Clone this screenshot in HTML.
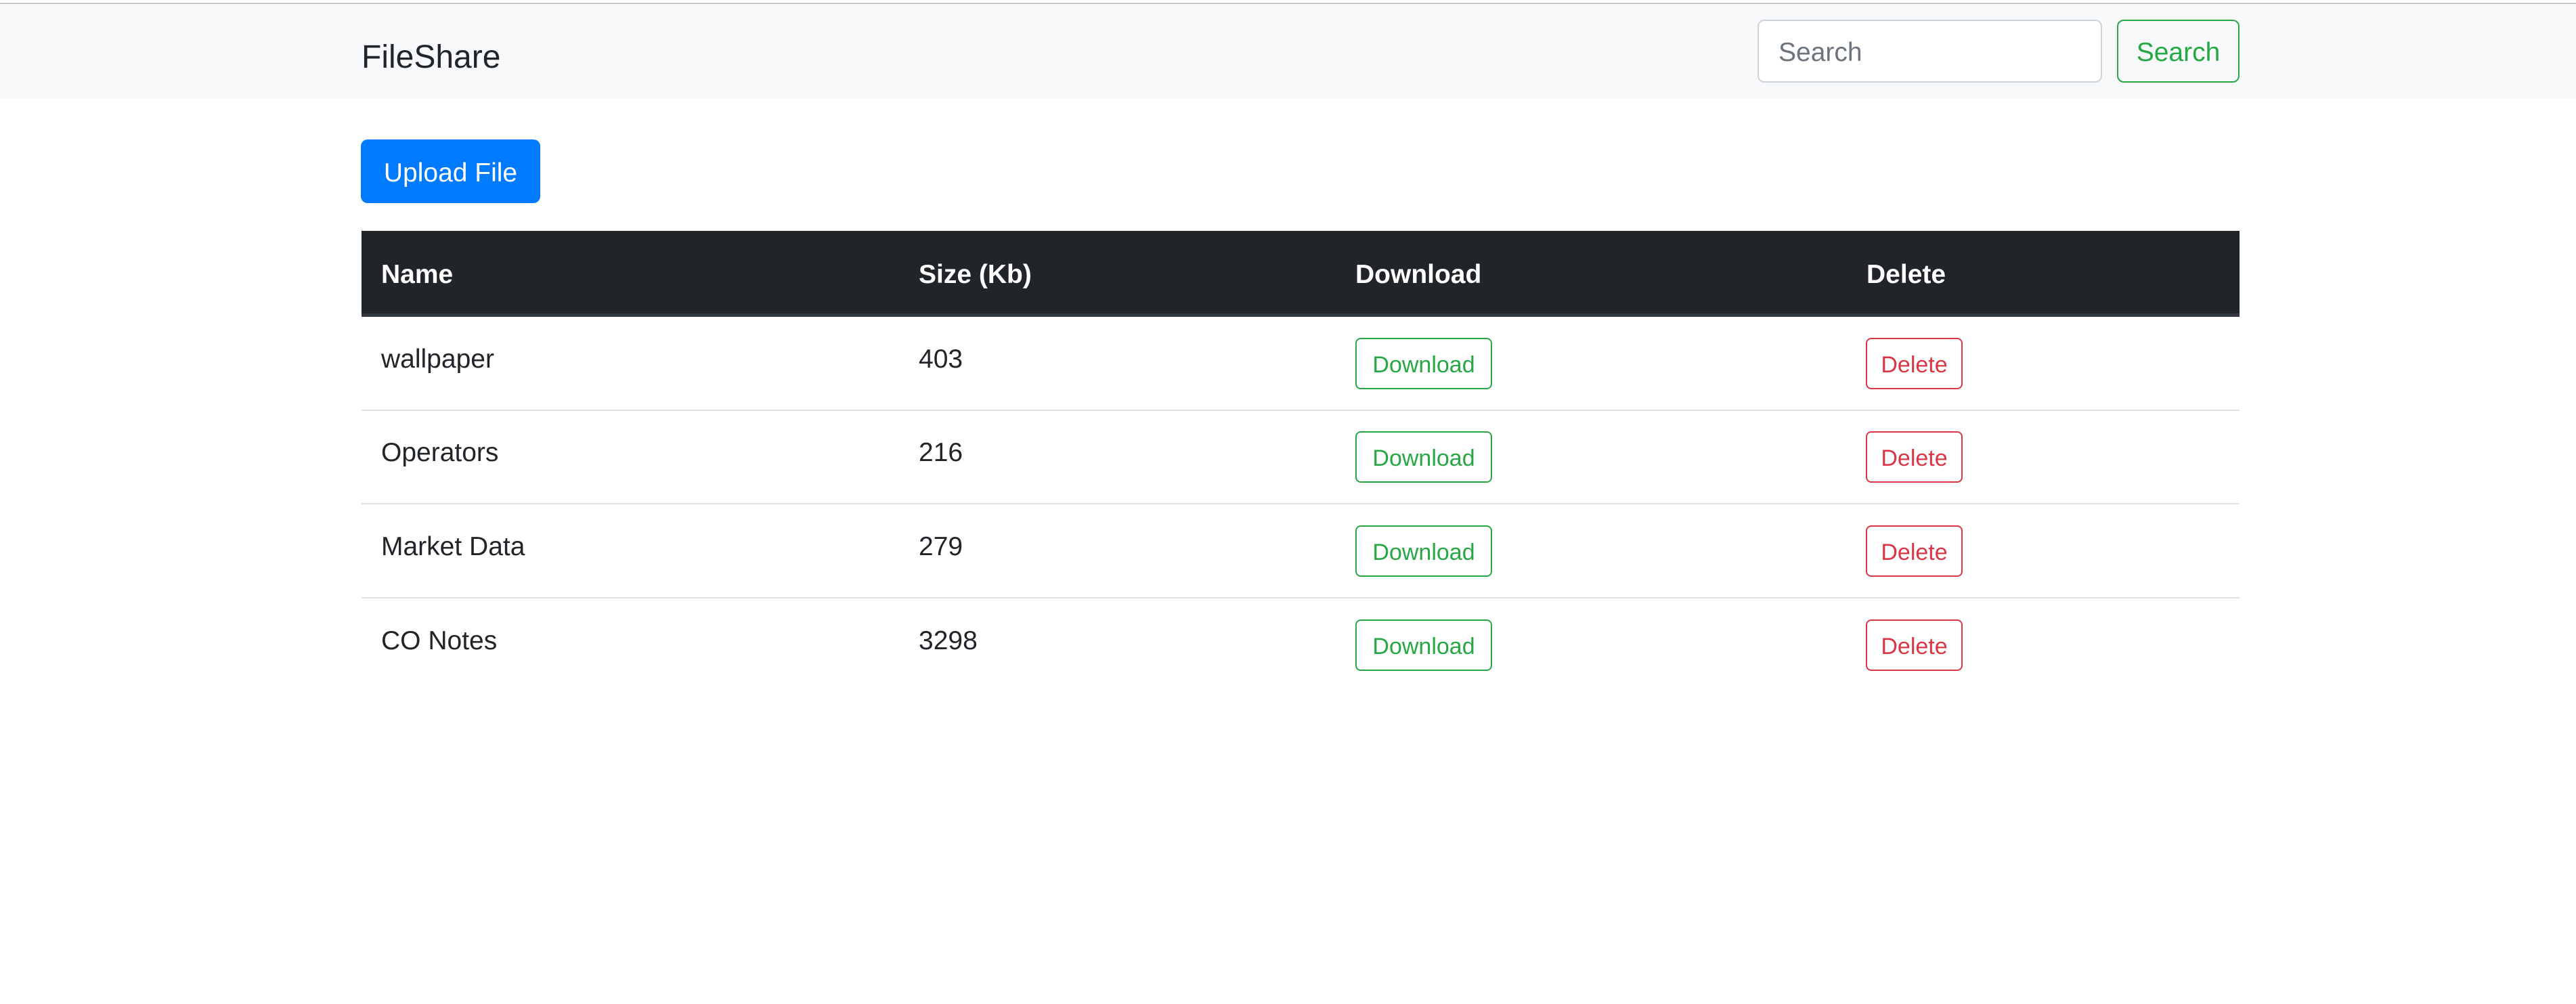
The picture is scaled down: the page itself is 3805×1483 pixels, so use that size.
<!DOCTYPE html>
<html><head><meta charset="utf-8"><style>
*{box-sizing:border-box;margin:0;padding:0}
html,body{width:3805px;height:1483px;background:#fff;overflow:hidden;font-family:"Liberation Sans",sans-serif;color:#212529}
.topline{position:absolute;left:0;top:4px;width:3805px;height:2px;background:#c8c8c8}
.nav{position:absolute;left:0;top:6px;width:3805px;height:140px;background:#f8f9fa}
.brand{position:absolute;left:534px;top:50px;font-size:48px;line-height:58px;color:#212529}
.inp{position:absolute;left:2596px;top:29px;width:509px;height:93px;border:2.5px solid #ced4da;border-radius:10px;background:#fff;font-size:39px;color:#6c757d;padding-left:29px;line-height:94px}
.sbtn{position:absolute;left:3127px;top:29px;width:181px;height:93px;border:2.5px solid #28a745;border-radius:10px;font-size:39px;color:#28a745;text-align:center;line-height:94px}
.up{position:absolute;left:533px;top:206px;width:265px;height:94px;background:#007bff;border-radius:10px;color:#fff;font-size:39px;text-align:center;line-height:100px}
.th{position:absolute;left:534px;top:341px;width:2774px;height:127px;background:#212529;border-bottom:5px solid #32383e}
.th div{position:absolute;top:4px;line-height:122px;color:#fff;font-weight:bold;font-size:39px}
.row{position:absolute;left:534px;width:2774px;height:139px;border-bottom:2.5px solid #dee2e6}
.row .t{position:absolute;top:34px;font-size:39px;line-height:58px}
.b{position:absolute;top:31px;height:76px;border:2.5px solid;border-radius:8px;font-size:34px;line-height:77px;text-align:center}
.dl{left:1468px;width:202px;color:#28a745;border-color:#28a745}
.de{left:2222px;width:143px;color:#dc3545;border-color:#dc3545}
</style></head><body>
<div class="topline"></div>
<div class="nav">
<div class="brand">FileShare</div>
</div>
<div class="inp">Search</div>
<div class="sbtn">Search</div>
<div class="up">Upload File</div>
<div class="th">
<div style="left:29px">Name</div>
<div style="left:823px">Size (Kb)</div>
<div style="left:1468px">Download</div>
<div style="left:2223px">Delete</div>
</div>
<div class="row" style="top:468px"><div class="t" style="left:29px">wallpaper</div><div class="t" style="left:823px">403</div><div class="b dl">Download</div><div class="b de">Delete</div></div>
<div class="row" style="top:606px"><div class="t" style="left:29px">Operators</div><div class="t" style="left:823px">216</div><div class="b dl">Download</div><div class="b de">Delete</div></div>
<div class="row" style="top:745px"><div class="t" style="left:29px">Market Data</div><div class="t" style="left:823px">279</div><div class="b dl">Download</div><div class="b de">Delete</div></div>
<div class="row" style="top:884px;border-bottom:none"><div class="t" style="left:29px">CO Notes</div><div class="t" style="left:823px">3298</div><div class="b dl">Download</div><div class="b de">Delete</div></div>
</body></html>
